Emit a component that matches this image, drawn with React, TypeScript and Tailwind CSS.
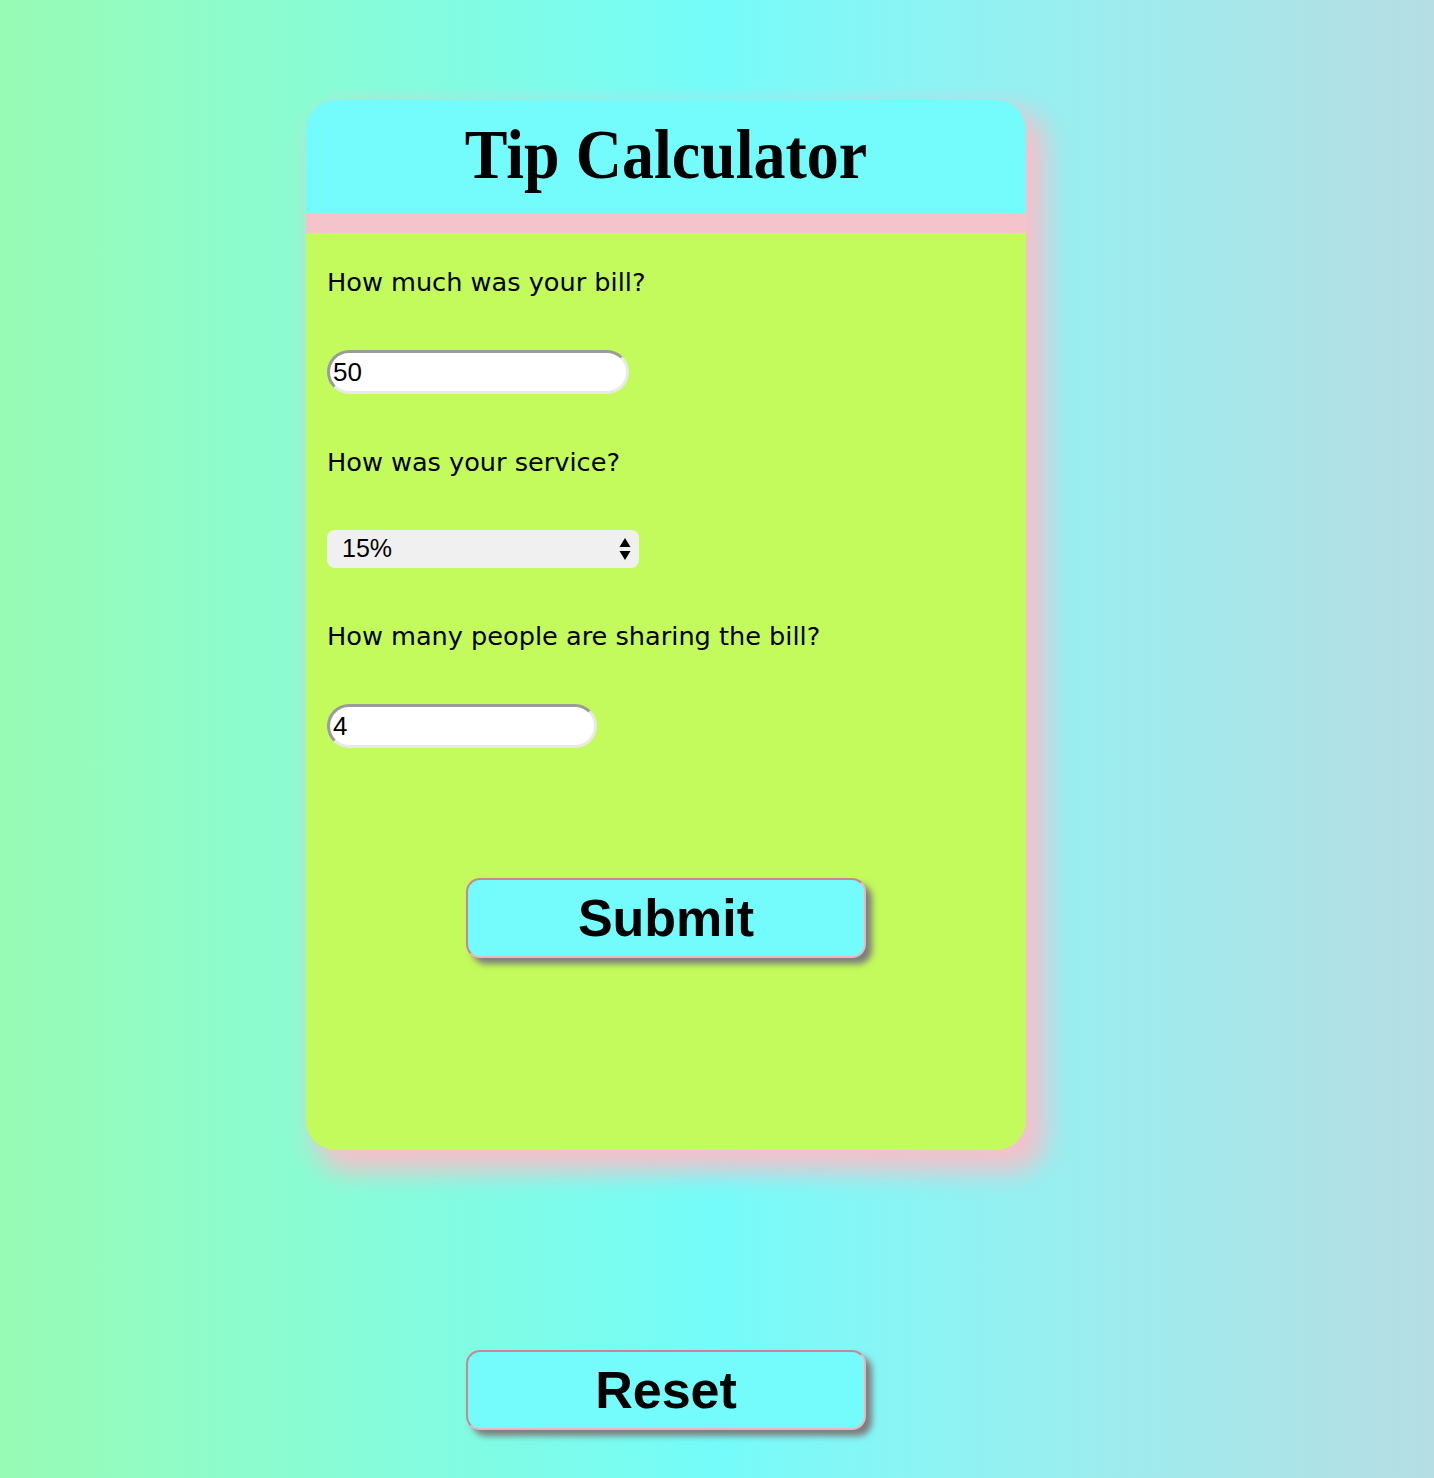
import { useState } from "react";

const labelCls =
  "font-['DejaVu_Sans','Verdana',sans-serif] text-[25.6px] leading-[30px] text-black";

const inputCls =
  "block h-[44px] rounded-full bg-white border-[3px] border-t-[#9b9b9b] border-l-[#9b9b9b] border-b-[#e9e9e9] border-r-[#e9e9e9] pl-[3px] font-['Liberation_Sans',Arial,sans-serif] text-[26px] text-black outline-none";

const btnCls =
  "w-[400px] h-[80px] rounded-[14px] bg-[#73fcfb] border-2 border-t-[#c98890] border-l-[#c98890] border-b-[#f1b4bd] border-r-[#f1b4bd] shadow-[6px_6px_6px_#7d7d7d] font-['Liberation_Sans',Arial,sans-serif] font-bold text-[52px] leading-none text-black";

export default function App() {
  const [bill, setBill] = useState("50");
  const [service, setService] = useState("0.15");
  const [people, setPeople] = useState("4");

  return (
    <div className="min-h-[1478px] w-full bg-gradient-to-r from-[#98fbb4] via-[#74fcfa] to-[#b5dee4] pt-[100px]">
      <div className="ml-[306px] w-[720px]">
        <div className="flex flex-col overflow-hidden rounded-[30px] bg-[#f4c3cb] shadow-[14px_16px_26px_6px_#f5c1cb]">
          <div className="flex h-[113px] items-center justify-center bg-[#73fcfb]">
            <h1 className="font-['Liberation_Serif','Times_New_Roman',serif] text-[64px] font-bold leading-none text-black scale-y-[1.08] -translate-y-[2px]">
              Tip Calculator
            </h1>
          </div>
          <div className="mt-[20px] flex h-[917px] flex-col bg-[#c3fb5c] px-[21px]">
            <p className={`${labelCls} mt-[34px]`}>How much was your bill?</p>
            <input
              className={`${inputCls} mt-[53px] w-[302px]`}
              value={bill}
              onChange={(e) => setBill(e.target.value)}
            />
            <p className={`${labelCls} mt-[53px]`}>How was your service?</p>
            <div className="relative mt-[53px] w-[312px]">
              <select
                className="block h-[38px] w-full appearance-none rounded-[8px] bg-[#f0f0f0] pl-[15px] font-['Liberation_Sans',Arial,sans-serif] text-[25px] text-black outline-none"
                value={service}
                onChange={(e) => setService(e.target.value)}
              >
                <option value="0.3">30%</option>
                <option value="0.2">20%</option>
                <option value="0.15">15%</option>
                <option value="0.1">10%</option>
                <option value="0.05">5%</option>
              </select>
              <svg
                className="pointer-events-none absolute right-[8px] top-[7px]"
                width="12"
                height="24"
                viewBox="0 0 12 24"
              >
                <path d="M6 1 L11.5 10 H0.5 Z" fill="#000" />
                <path d="M6 23 L11.5 14 H0.5 Z" fill="#000" />
              </svg>
            </div>
            <p className={`${labelCls} mt-[53px]`}>How many people are sharing the bill?</p>
            <input
              className={`${inputCls} mt-[53px] w-[270px]`}
              value={people}
              onChange={(e) => setPeople(e.target.value)}
            />
            <div className="mt-[130px] flex justify-center">
              <button className={btnCls}>Submit</button>
            </div>
          </div>
        </div>
        <div className="mt-[200px] flex justify-center">
          <button className={btnCls}>Reset</button>
        </div>
      </div>
    </div>
  );
}
